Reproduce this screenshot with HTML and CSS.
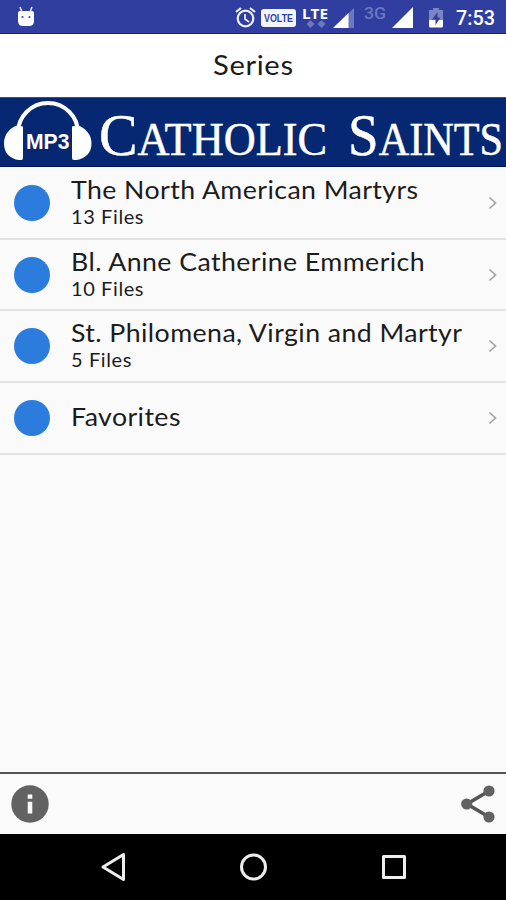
FILE: index.html
```
<!DOCTYPE html>
<html lang="en">
<head>
    <meta charset="UTF-8">
    <meta name="viewport" content="width=device-width, initial-scale=1.0">
    <title>Series</title>
    <link rel="stylesheet" href="styles.css">
</head>
<body>

  <!-- status bar -->
  <div class="status-bar">
    <svg width="506" height="34" viewBox="0 0 506 34">
      <!-- android head -->
      <path d="M18 13q0-2 2-2h12q2 0 2 2v8q0 5-5 5h-6q-5 0-5-5z" fill="#fff"/>
      <path d="M20 7l2 5M32 7l-2 5" stroke="#e4e5f5" stroke-width="1.6"/>
      <circle cx="22.500" cy="17" r="1" fill="#303f9f"/>
      <circle cx="29.500" cy="17" r="1" fill="#303f9f"/>
      <!-- alarm -->
      <g fill="none" stroke="#eef0fb" stroke-width="2.200">
        <circle cx="245.500" cy="18.500" r="7.800"/>
        <path d="M236 12l5-4M255 12l-5-4"/>
        <path d="M245 14v5l4 3" stroke-width="1.700"/>
      </g>
      <rect x="261" y="9" width="35" height="18" rx="3" fill="#f3f4fc"/>
      <text class="volte" x="264" y="22" textLength="29" lengthAdjust="spacingAndGlyphs">VOLTE</text>
      <text class="lte" x="302" y="19" textLength="26" lengthAdjust="spacingAndGlyphs">LTE</text>
      <path d="M306.500 24l4-4 4 4-4 4zM317.500 24l4-4 4 4-4 4z" fill="#6c77be"/>
      <path d="M354 8v20h-21z" fill="#6c77be"/>
      <path d="M348.500 13v15H333z" fill="#fff"/>
      <text class="net" x="364" y="19" textLength="22" lengthAdjust="spacingAndGlyphs">3G</text>
      <path d="M413 7v21h-21z" fill="#fff"/>
      <!-- battery -->
      <path d="M429 10h4V8h6v2h4v11h-14z" fill="#7b85c4"/>
      <path d="M429 20h14v6q0 1.500-1.500 1.500h-11q-1.500 0-1.500-1.500z" fill="#fff"/>
      <path d="M437.500 12l-5.500 7.500h3.500V25l5-7.500h-3z" fill="#303f9f"/>
      <text class="clock" x="456" y="25" textLength="39" lengthAdjust="spacingAndGlyphs">7:53</text>
    </svg>
  </div>

  <header class="title-bar">
    <h1>Series</h1>
  </header>

  <div class="banner">
    <svg width="506" height="68" viewBox="0 0 506 68">
      <!-- headphones -->
      <path d="M18 40V35a30 30 0 0 1 60 0v5" fill="none" stroke="#fff" stroke-width="4"/>
      <path d="M23 28.500V60q0 2-2 2h-2C10 61 4 55 4 45.500S10 30 17 27.500z" fill="#fff"/>
      <path d="M72 28.500V60q0 2 2 2h2c9-1 15.500-7 15.500-16.500S85 30 78 27.500z" fill="#fff"/>
      <text class="mp3" x="26" y="51" textLength="43.500" lengthAdjust="spacingAndGlyphs">MP3</text>
      <text class="brand" x="99" y="57" textLength="228" lengthAdjust="spacingAndGlyphs"><tspan class="big">C</tspan>ATHOLIC</text>
      <text class="brand" x="348" y="57" textLength="155" lengthAdjust="spacingAndGlyphs"><tspan class="big">S</tspan>AINTS</text>
    </svg>
  </div>

  <ul class="series-list">
    <li class="row">
      <span class="dot"></span>
      <div class="info">
        <p class="name">The North American Martyrs</p>
        <p class="files">13 Files</p>
      </div>
      <svg class="arrow" width="10" height="14" viewBox="0 0 10 14"><path d="M1.500 1.500L7.500 7l-6 5.500"/></svg>
    </li>
    <li class="row">
      <span class="dot"></span>
      <div class="info">
        <p class="name">Bl. Anne Catherine Emmerich</p>
        <p class="files">10 Files</p>
      </div>
      <svg class="arrow" width="10" height="14" viewBox="0 0 10 14"><path d="M1.500 1.500L7.500 7l-6 5.500"/></svg>
    </li>
    <li class="row">
      <span class="dot"></span>
      <div class="info">
        <p class="name">St. Philomena, Virgin and Martyr</p>
        <p class="files">5 Files</p>
      </div>
      <svg class="arrow" width="10" height="14" viewBox="0 0 10 14"><path d="M1.500 1.500L7.500 7l-6 5.500"/></svg>
    </li>
    <li class="row">
      <span class="dot"></span>
      <div class="info">
        <p class="name">Favorites</p>
      </div>
      <svg class="arrow" width="10" height="14" viewBox="0 0 10 14"><path d="M1.500 1.500L7.500 7l-6 5.500"/></svg>
    </li>
  </ul>

  <footer class="toolbar">
    <svg width="38" height="38" viewBox="0 0 38 38">
      <circle cx="19" cy="19" r="18.700" fill="#626262"/>
      <path d="M16.700 9.500h4.600v4.300h-4.600zM16.700 16.700h4.600v11.800h-4.600z" fill="#fafafa"/>
    </svg>
    <svg width="34" height="38" viewBox="0 0 34 38">
      <path d="M28 6L6 19l22 13" fill="none" stroke="#555" stroke-width="3.600"/>
      <g fill="#626262">
        <circle cx="28" cy="6" r="5.600"/>
        <circle cx="5.700" cy="19" r="5.600"/>
        <circle cx="28" cy="32" r="5.600"/>
      </g>
    </svg>
  </footer>

  <!-- android navigation -->
  <nav class="nav-bar">
    <svg width="506" height="66" viewBox="0 0 506 66">
      <g fill="none" stroke="#eee" stroke-width="3" stroke-linejoin="round">
        <path d="M123.500 20.500v25L103 33z"/>
        <circle cx="253.500" cy="33" r="12"/>
        <rect x="383.500" y="22.500" width="21" height="21"/>
      </g>
    </svg>
  </nav>

</body>
</html>
```

FILE: styles.css
```
* {
  margin: 0;
  padding: 0;
  box-sizing: border-box;
}

body {
  height: 900px;
  display: flex;
  flex-direction: column;
  overflow: hidden;
  background-color: #fafafa;
  color: #1c1c1c;
  font-family: Lato, sans-serif;
}

svg {
  display: block;
  flex-shrink: 0;
  overflow: visible;
}

.status-bar {
  height: 34px;
  background-color: #303f9f;
  border-bottom: 1px solid #1414a0;
}

.volte {
  font: bold 11px "Liberation Sans", sans-serif;
  fill: #303f9f;
}

.lte {
  font: bold 15px "Open Sans", sans-serif;
  fill: #fff;
}

.net {
  font: 500 17px Roboto, sans-serif;
  fill: #6c77be;
}

.clock {
  font: 500 20px Roboto, sans-serif;
  fill: #fff;
}

.title-bar {
  height: 63px;
  display: flex;
  align-items: center;
  justify-content: center;
  padding-bottom: 2px;
  background-color: #fff;
}

.title-bar h1 {
  font-size: 27px;
  font-weight: normal;
  letter-spacing: 0.6px;
  transform: scaleX(1.08);
}

.banner {
  height: 70px;
  background-color: #062872;
  border-top: 1px solid #33508c;
  border-bottom: 1px solid #000f60;
}

.mp3 {
  font: bold 22px "Liberation Sans", sans-serif;
  fill: #fff;
}

.brand {
  font: 46px "Liberation Serif", serif;
  fill: #fff;
  stroke: #fff;
  stroke-width: 0.5px;
}

.big {
  font-size: 60px;
}

.series-list {
  flex: 1;
  padding-top: 1px;
  list-style: none;
}

.row {
  height: 71.7px;
  display: flex;
  align-items: center;
  padding: 0 8px 0 14px;
  border-bottom: 2px solid #e2e2e2;
}

.dot {
  width: 36px;
  height: 36px;
  border-radius: 50%;
  background-color: #2b7cdd;
}

.info {
  flex: 1;
  margin-left: 21px;
  padding-bottom: 4px;
}

/* stretched a little to get the wide letters */
.name {
  font-size: 25px;
  line-height: 30px;
  letter-spacing: 0.4px;
  white-space: nowrap;
  transform: scaleX(1.068);
  transform-origin: left;
}

.files {
  font-size: 20px;
  line-height: 24px;
  letter-spacing: 0.6px;
}

.arrow path {
  fill: none;
  stroke: #a0a0a0;
  stroke-width: 1.6;
}

.toolbar {
  height: 62px;
  display: flex;
  align-items: center;
  justify-content: space-between;
  padding: 0 11px;
  border-top: 2px solid #555;
}

.nav-bar {
  height: 66px;
  background-color: #000;
}
```
